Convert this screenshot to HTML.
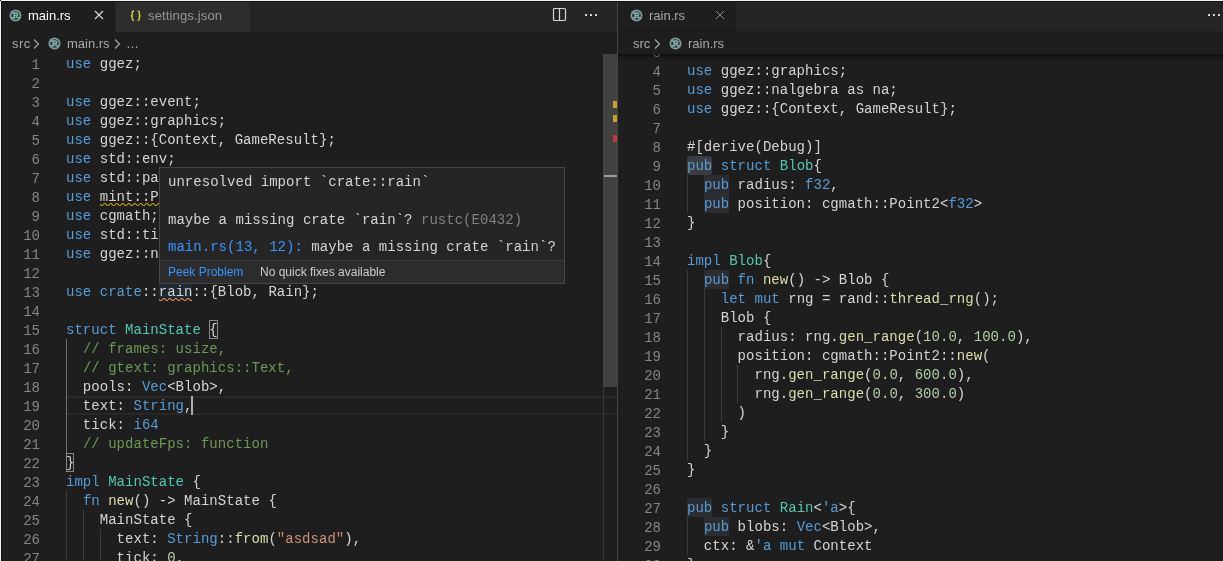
<!DOCTYPE html>
<html><head><meta charset="utf-8">
<style>
*{box-sizing:border-box;margin:0;padding:0}
html,body{width:1223px;height:561px;overflow:hidden;background:#1e1e1e}
body{position:relative;font-family:"Liberation Sans",sans-serif;font-size:13px;color:#ccc}
.abs{position:absolute}
.ln,.cl{position:absolute;height:19px;line-height:19px;font-family:"Liberation Mono",monospace;font-size:14px;white-space:pre}
.ln{text-align:right;color:#858585}
.cl{color:#d4d4d4;z-index:0;letter-spacing:0.03px}
.k{color:#569cd6}.t{color:#4ec9b0}.c{color:#6a9955}.f{color:#dcdcaa}.s{color:#ce9178}.n{color:#b5cea8}
.h,.h1{color:#569cd6;position:relative;display:inline-block;height:19px;vertical-align:top}
.h::before,.h1::before{content:'';position:absolute;left:0;right:0;top:-1px;height:19px;background:#2b2d31;z-index:-1}
.h1::before{background:#3a3d41;border-radius:3px}
.ig{position:absolute;width:1px;height:19px;background:#3c3c3c}
.ig.a{background:#707070}
.bm{position:relative;display:inline-block;height:19px;vertical-align:top}
.bm::before{content:'';position:absolute;left:0;right:0;top:-1px;height:19px;border:1px solid #888;box-sizing:border-box}
.wy,.wr{position:relative}
.tab{position:absolute;top:1px;height:31px;line-height:31px;font-size:13px;white-space:nowrap}
.ui{position:absolute;white-space:nowrap;font-size:13px}
#lp,#rp{position:absolute;top:0;height:561px;overflow:hidden;will-change:transform}
</style></head><body>
<!-- left pane -->
<div id="lp" style="left:0;width:617px">
  <div class="abs" style="left:0;top:1px;width:617px;height:31px;background:#252526"></div>
  <div class="abs" style="left:1px;top:1px;width:114px;height:31px;background:#1e1e1e"></div>
  <div class="abs" style="left:116px;top:1px;width:134px;height:31px;background:#2d2d2d"></div>
  <svg class="abs" style="left:9px;top:9px" width="13" height="13" viewBox="0 0 13 13"><circle cx="6.5" cy="6.5" r="6" fill="#7f9d9a"/><circle cx="6.5" cy="6.5" r="4.3" fill="#213a38"/><path d="M3 3.9h4.4a1.3 1.3 0 0 1 0 2.6H5.3M5.2 3.9v4.8M7 6.5l1.4 2.2M2.6 8.7h3.9M7.9 8.7h2.6" stroke="#8eaca9" stroke-width="1.5" fill="none"/></svg>
  <div class="ui" style="left:28px;top:8px;color:#fff">main.rs</div>
  <svg class="abs" style="left:94px;top:10px" width="10" height="10" viewBox="0 0 10 10"><path d="M1 1l8 8M9 1l-8 8" stroke="#dcdcdc" stroke-width="1.1" fill="none"/></svg>
  <svg class="abs" style="left:129px;top:9px" width="14" height="13" viewBox="0 0 14 13"><path d="M5 2C3.6 2 3.3 2.4 3.3 3.4V5.4C3.3 6.2 2.8 6.7 1.8 6.75C2.8 6.8 3.3 7.3 3.3 8.1V10.1C3.3 11.1 3.6 11.5 5 11.5M8.6 2C10 2 10.3 2.4 10.3 3.4V5.4C10.3 6.2 10.8 6.7 11.8 6.75C10.8 6.8 10.3 7.3 10.3 8.1V10.1C10.3 11.1 10 11.5 8.6 11.5" stroke="#cbcb41" stroke-width="1.5" fill="none"/></svg>
  <div class="ui" style="left:148px;top:8px;color:#969696;letter-spacing:0.15px">settings.json</div>
  <!-- actions -->
  <svg class="abs" style="left:552px;top:7px" width="16" height="16" viewBox="0 0 16 16"><rect x="1.5" y="1.5" width="12" height="12" rx="1" fill="none" stroke="#d4d4d4" stroke-width="1.2"/><path d="M7.5 1.5v12" stroke="#d4d4d4" stroke-width="1.2"/></svg>
  <div class="abs" style="left:585px;top:14px;width:2px;height:2px;background:#d4d4d4;box-shadow:5px 0 #d4d4d4,10px 0 #d4d4d4"></div>
  <!-- breadcrumbs -->
  <div class="ui" style="left:12px;top:36px;color:#a9a9a9;letter-spacing:0.4px">src</div>
  <svg class="abs" style="left:32px;top:38px" width="9" height="12" viewBox="0 0 9 12"><path d="M2 1.5l4.5 4.5L2 10.5" stroke="#a9a9a9" stroke-width="1.1" fill="none"/></svg>
  <svg class="abs" style="left:48px;top:37px" width="13" height="13" viewBox="0 0 13 13"><circle cx="6.5" cy="6.5" r="6" fill="#7f9d9a"/><circle cx="6.5" cy="6.5" r="4.3" fill="#213a38"/><path d="M3 3.9h4.4a1.3 1.3 0 0 1 0 2.6H5.3M5.2 3.9v4.8M7 6.5l1.4 2.2M2.6 8.7h3.9M7.9 8.7h2.6" stroke="#8eaca9" stroke-width="1.5" fill="none"/></svg>
  <div class="ui" style="left:67px;top:36px;color:#a9a9a9">main.rs</div>
  <svg class="abs" style="left:113px;top:38px" width="9" height="12" viewBox="0 0 9 12"><path d="M2 1.5l4.5 4.5L2 10.5" stroke="#a9a9a9" stroke-width="1.1" fill="none"/></svg>
  <div class="ui" style="left:126px;top:36px;color:#a9a9a9">…</div>
  <!-- current line -->
  <div class="abs" style="left:66px;top:396px;width:551px;height:19px;border:2px solid #282828;border-left:0;border-right:0"></div>
  <!-- squiggles -->
  <svg class="abs" style="left:0;top:0" width="617" height="561">
    <defs>
      <pattern id="sqy" x="100" y="203" width="6" height="3" patternUnits="userSpaceOnUse"><g fill="#cca700"><polygon points="5.5,0 2.5,3 1.1,3 4.1,0"/><polygon points="4,0 6,2 6,0.6 5.4,0"/><polygon points="0,2 1,3 2.4,3 0,0.6"/></g></pattern>
      <pattern id="sqr" x="159" y="298" width="6" height="3" patternUnits="userSpaceOnUse"><g fill="#f48771"><polygon points="5.5,0 2.5,3 1.1,3 4.1,0"/><polygon points="4,0 6,2 6,0.6 5.4,0"/><polygon points="0,2 1,3 2.4,3 0,0.6"/></g></pattern>
    </defs>
    <rect x="159" y="282" width="33" height="16" fill="#264f78" fill-opacity="0.2"/>
    <rect x="100" y="203" width="100" height="3" fill="url(#sqy)"/>
    <rect x="159" y="298" width="33" height="3" fill="url(#sqr)"/>
  </svg>
<div class="ln" style="left:0;width:40px;top:56px">1</div>
<div class="cl" style="left:66px;top:55px"><span class="k">use</span> ggez;</div>
<div class="ln" style="left:0;width:40px;top:75px">2</div>
<div class="cl" style="left:66px;top:74px"></div>
<div class="ln" style="left:0;width:40px;top:94px">3</div>
<div class="cl" style="left:66px;top:93px"><span class="k">use</span> ggez::event;</div>
<div class="ln" style="left:0;width:40px;top:113px">4</div>
<div class="cl" style="left:66px;top:112px"><span class="k">use</span> ggez::graphics;</div>
<div class="ln" style="left:0;width:40px;top:132px">5</div>
<div class="cl" style="left:66px;top:131px"><span class="k">use</span> ggez::{Context, GameResult};</div>
<div class="ln" style="left:0;width:40px;top:151px">6</div>
<div class="cl" style="left:66px;top:150px"><span class="k">use</span> std::env;</div>
<div class="ln" style="left:0;width:40px;top:170px">7</div>
<div class="cl" style="left:66px;top:169px"><span class="k">use</span> std::path;</div>
<div class="ln" style="left:0;width:40px;top:189px">8</div>
<div class="cl" style="left:66px;top:188px"><span class="k">use</span> <span class="wy">mint::Point2</span>;</div>
<div class="ln" style="left:0;width:40px;top:208px">9</div>
<div class="cl" style="left:66px;top:207px"><span class="k">use</span> cgmath;</div>
<div class="ln" style="left:0;width:40px;top:227px">10</div>
<div class="cl" style="left:66px;top:226px"><span class="k">use</span> std::time;</div>
<div class="ln" style="left:0;width:40px;top:246px">11</div>
<div class="cl" style="left:66px;top:245px"><span class="k">use</span> ggez::nalgebra as na;</div>
<div class="ln" style="left:0;width:40px;top:265px">12</div>
<div class="cl" style="left:66px;top:264px"></div>
<div class="ln" style="left:0;width:40px;top:284px">13</div>
<div class="cl" style="left:66px;top:283px"><span class="k">use</span> <span class="k">crate</span>::<span class="wr">rain</span>::{Blob, Rain};</div>
<div class="ln" style="left:0;width:40px;top:303px">14</div>
<div class="cl" style="left:66px;top:302px"></div>
<div class="ln" style="left:0;width:40px;top:322px">15</div>
<div class="cl" style="left:66px;top:321px"><span class="k">struct</span> <span class="t">MainState</span> <span class="bm">{</span></div>
<div class="ln" style="left:0;width:40px;top:341px">16</div>
<div class="cl" style="left:66px;top:340px">  <span class="c">// frames: usize,</span></div>
<div class="ig a" style="left:66.0px;top:339px"></div>
<div class="ln" style="left:0;width:40px;top:360px">17</div>
<div class="cl" style="left:66px;top:359px">  <span class="c">// gtext: graphics::Text,</span></div>
<div class="ig a" style="left:66.0px;top:358px"></div>
<div class="ln" style="left:0;width:40px;top:379px">18</div>
<div class="cl" style="left:66px;top:378px">  pools: <span class="k">Vec</span>&lt;Blob&gt;,</div>
<div class="ig a" style="left:66.0px;top:377px"></div>
<div class="ln" style="left:0;width:40px;top:398px">19</div>
<div class="cl" style="left:66px;top:397px">  text: <span class="k">String</span>,</div>
<div class="ig a" style="left:66.0px;top:396px"></div>
<div class="ln" style="left:0;width:40px;top:417px">20</div>
<div class="cl" style="left:66px;top:416px">  tick: <span class="k">i64</span></div>
<div class="ig a" style="left:66.0px;top:415px"></div>
<div class="ln" style="left:0;width:40px;top:436px">21</div>
<div class="cl" style="left:66px;top:435px">  <span class="c">// updateFps: function</span></div>
<div class="ig a" style="left:66.0px;top:434px"></div>
<div class="ln" style="left:0;width:40px;top:455px">22</div>
<div class="cl" style="left:66px;top:454px"><span class="bm">}</span></div>
<div class="ln" style="left:0;width:40px;top:474px">23</div>
<div class="cl" style="left:66px;top:473px"><span class="k">impl</span> <span class="t">MainState</span> {</div>
<div class="ln" style="left:0;width:40px;top:493px">24</div>
<div class="cl" style="left:66px;top:492px">  <span class="k">fn</span> <span class="f">new</span>() -&gt; MainState {</div>
<div class="ig" style="left:66.0px;top:491px"></div>
<div class="ln" style="left:0;width:40px;top:512px">25</div>
<div class="cl" style="left:66px;top:511px">    MainState {</div>
<div class="ig" style="left:66.0px;top:510px"></div>
<div class="ig" style="left:82.8px;top:510px"></div>
<div class="ln" style="left:0;width:40px;top:531px">26</div>
<div class="cl" style="left:66px;top:530px">      text: <span class="k">String</span>::<span class="f">from</span>(<span class="s">&quot;asdsad&quot;</span>),</div>
<div class="ig" style="left:66.0px;top:529px"></div>
<div class="ig" style="left:82.8px;top:529px"></div>
<div class="ig" style="left:99.6px;top:529px"></div>
<div class="ln" style="left:0;width:40px;top:550px">27</div>
<div class="cl" style="left:66px;top:549px">      tick: <span class="n">0</span>,</div>
<div class="ig" style="left:66.0px;top:548px"></div>
<div class="ig" style="left:82.8px;top:548px"></div>
<div class="ig" style="left:99.6px;top:548px"></div>
  <!-- cursor -->
  <div class="abs" style="left:191px;top:396px;width:2px;height:19px;background:#aeafad"></div>
  <!-- scrollbar / overview -->
  <div class="abs" style="left:603px;top:54px;width:1px;height:507px;background:#3a3a3a"></div>
  <div class="abs" style="left:603px;top:54px;width:14px;height:333px;background:#424242"></div>
  <div class="abs" style="left:613px;top:101px;width:4px;height:7px;background:#c5a332"></div>
  <div class="abs" style="left:613px;top:115px;width:4px;height:7px;background:#c5a332"></div>
  <div class="abs" style="left:613px;top:135px;width:4px;height:7px;background:#bd3a44"></div>
  <div class="abs" style="left:604px;top:175px;width:13px;height:2px;background:#9c9c9c"></div>
  <!-- hover -->
  <div class="abs" style="left:159px;top:167px;width:406px;height:117px;background:#252526;border:1px solid #454545"></div>
  <div class="abs" style="left:160px;top:260px;width:404px;height:23px;background:#2c2c2d;border-top:1px solid #3a3a3a"></div>
  <div class="cl" style="left:168px;top:173px">unresolved import `crate::rain`</div>
  <div class="cl" style="left:168px;top:211px">maybe a missing crate `rain`? <span style="color:#808080">rustc(E0432)</span></div>
  <div class="cl" style="left:168px;top:238px"><span style="color:#3794ff">main.rs(13, 12):</span> maybe a missing crate `rain`?</div>
  <div class="ui" style="left:168px;top:265px;font-size:12px;color:#3794ff">Peek Problem</div>
  <div class="ui" style="left:260px;top:265px;font-size:12px;color:#ccc">No quick fixes available</div>
</div>
<!-- divider -->
<div class="abs" style="left:617px;top:1px;width:1px;height:560px;background:#444"></div>
<!-- right pane -->
<div id="rp" style="left:618px;width:605px">
 <div class="abs" style="left:-618px;top:0;width:1223px;height:561px">
<div class="ln" style="left:601px;width:60px;top:44px">3</div>
<div class="cl" style="left:687px;top:43px"></div>
<div class="ln" style="left:601px;width:60px;top:63px">4</div>
<div class="cl" style="left:687px;top:62px"><span class="k">use</span> ggez::graphics;</div>
<div class="ln" style="left:601px;width:60px;top:82px">5</div>
<div class="cl" style="left:687px;top:81px"><span class="k">use</span> ggez::nalgebra as na;</div>
<div class="ln" style="left:601px;width:60px;top:101px">6</div>
<div class="cl" style="left:687px;top:100px"><span class="k">use</span> ggez::{Context, GameResult};</div>
<div class="ln" style="left:601px;width:60px;top:120px">7</div>
<div class="cl" style="left:687px;top:119px"></div>
<div class="ln" style="left:601px;width:60px;top:139px">8</div>
<div class="cl" style="left:687px;top:138px">#[derive(Debug)]</div>
<div class="ln" style="left:601px;width:60px;top:158px">9</div>
<div class="cl" style="left:687px;top:157px"><span class="h1">pub</span> <span class="k">struct</span> <span class="t">Blob</span>{</div>
<div class="ln" style="left:601px;width:60px;top:177px">10</div>
<div class="cl" style="left:687px;top:176px">  <span class="h">pub</span> radius: <span class="k">f32</span>,</div>
<div class="ig" style="left:687.0px;top:175px"></div>
<div class="ln" style="left:601px;width:60px;top:196px">11</div>
<div class="cl" style="left:687px;top:195px">  <span class="h">pub</span> position: cgmath::Point2&lt;<span class="k">f32</span>&gt;</div>
<div class="ig" style="left:687.0px;top:194px"></div>
<div class="ln" style="left:601px;width:60px;top:215px">12</div>
<div class="cl" style="left:687px;top:214px">}</div>
<div class="ln" style="left:601px;width:60px;top:234px">13</div>
<div class="cl" style="left:687px;top:233px"></div>
<div class="ln" style="left:601px;width:60px;top:253px">14</div>
<div class="cl" style="left:687px;top:252px"><span class="k">impl</span> <span class="t">Blob</span>{</div>
<div class="ln" style="left:601px;width:60px;top:272px">15</div>
<div class="cl" style="left:687px;top:271px">  <span class="h">pub</span> <span class="k">fn</span> <span class="f">new</span>() -&gt; Blob {</div>
<div class="ig" style="left:687.0px;top:270px"></div>
<div class="ln" style="left:601px;width:60px;top:291px">16</div>
<div class="cl" style="left:687px;top:290px">    <span class="k">let</span> <span class="k">mut</span> rng = rand::<span class="f">thread_rng</span>();</div>
<div class="ig" style="left:687.0px;top:289px"></div>
<div class="ig" style="left:703.8px;top:289px"></div>
<div class="ln" style="left:601px;width:60px;top:310px">17</div>
<div class="cl" style="left:687px;top:309px">    Blob {</div>
<div class="ig" style="left:687.0px;top:308px"></div>
<div class="ig" style="left:703.8px;top:308px"></div>
<div class="ln" style="left:601px;width:60px;top:329px">18</div>
<div class="cl" style="left:687px;top:328px">      radius: rng.<span class="f">gen_range</span>(<span class="n">10.0</span>, <span class="n">100.0</span>),</div>
<div class="ig" style="left:687.0px;top:327px"></div>
<div class="ig" style="left:703.8px;top:327px"></div>
<div class="ig" style="left:720.6px;top:327px"></div>
<div class="ln" style="left:601px;width:60px;top:348px">19</div>
<div class="cl" style="left:687px;top:347px">      position: cgmath::Point2::<span class="f">new</span>(</div>
<div class="ig" style="left:687.0px;top:346px"></div>
<div class="ig" style="left:703.8px;top:346px"></div>
<div class="ig" style="left:720.6px;top:346px"></div>
<div class="ln" style="left:601px;width:60px;top:367px">20</div>
<div class="cl" style="left:687px;top:366px">        rng.<span class="f">gen_range</span>(<span class="n">0.0</span>, <span class="n">600.0</span>),</div>
<div class="ig" style="left:687.0px;top:365px"></div>
<div class="ig" style="left:703.8px;top:365px"></div>
<div class="ig" style="left:720.6px;top:365px"></div>
<div class="ig" style="left:737.4px;top:365px"></div>
<div class="ln" style="left:601px;width:60px;top:386px">21</div>
<div class="cl" style="left:687px;top:385px">        rng.<span class="f">gen_range</span>(<span class="n">0.0</span>, <span class="n">300.0</span>)</div>
<div class="ig" style="left:687.0px;top:384px"></div>
<div class="ig" style="left:703.8px;top:384px"></div>
<div class="ig" style="left:720.6px;top:384px"></div>
<div class="ig" style="left:737.4px;top:384px"></div>
<div class="ln" style="left:601px;width:60px;top:405px">22</div>
<div class="cl" style="left:687px;top:404px">      )</div>
<div class="ig" style="left:687.0px;top:403px"></div>
<div class="ig" style="left:703.8px;top:403px"></div>
<div class="ig" style="left:720.6px;top:403px"></div>
<div class="ln" style="left:601px;width:60px;top:424px">23</div>
<div class="cl" style="left:687px;top:423px">    }</div>
<div class="ig" style="left:687.0px;top:422px"></div>
<div class="ig" style="left:703.8px;top:422px"></div>
<div class="ln" style="left:601px;width:60px;top:443px">24</div>
<div class="cl" style="left:687px;top:442px">  }</div>
<div class="ig" style="left:687.0px;top:441px"></div>
<div class="ln" style="left:601px;width:60px;top:462px">25</div>
<div class="cl" style="left:687px;top:461px">}</div>
<div class="ln" style="left:601px;width:60px;top:481px">26</div>
<div class="cl" style="left:687px;top:480px"></div>
<div class="ln" style="left:601px;width:60px;top:500px">27</div>
<div class="cl" style="left:687px;top:499px"><span class="h">pub</span> <span class="k">struct</span> <span class="t">Rain</span>&lt;<span class="k">&#x27;a</span>&gt;{</div>
<div class="ln" style="left:601px;width:60px;top:519px">28</div>
<div class="cl" style="left:687px;top:518px">  <span class="h">pub</span> blobs: <span class="k">Vec</span>&lt;Blob&gt;,</div>
<div class="ig" style="left:687.0px;top:517px"></div>
<div class="ln" style="left:601px;width:60px;top:538px">29</div>
<div class="cl" style="left:687px;top:537px">  ctx: &amp;<span class="k">&#x27;a</span> <span class="k">mut</span> Context</div>
<div class="ig" style="left:687.0px;top:536px"></div>
<div class="ln" style="left:601px;width:60px;top:557px">30</div>
<div class="cl" style="left:687px;top:556px">}</div>
  <div class="abs" style="left:618px;top:1px;width:605px;height:31px;background:#252526"></div>
  <div class="abs" style="left:618px;top:1px;width:118px;height:31px;background:#1e1e1e"></div>
  <div class="abs" style="left:598px;top:32px;width:660px;height:22px;background:#1e1e1e;box-shadow:0 3px 4px -1px rgba(0,0,0,.65)"></div>
  <svg class="abs" style="left:630px;top:9px" width="13" height="13" viewBox="0 0 13 13"><circle cx="6.5" cy="6.5" r="6" fill="#7f9d9a"/><circle cx="6.5" cy="6.5" r="4.3" fill="#213a38"/><path d="M3 3.9h4.4a1.3 1.3 0 0 1 0 2.6H5.3M5.2 3.9v4.8M7 6.5l1.4 2.2M2.6 8.7h3.9M7.9 8.7h2.6" stroke="#8eaca9" stroke-width="1.5" fill="none"/></svg>
  <div class="ui" style="left:649px;top:8px;color:#a8a8a8">rain.rs</div>
  <svg class="abs" style="left:715px;top:10px" width="10" height="10" viewBox="0 0 10 10"><path d="M1 1l8 8M9 1l-8 8" stroke="#8c8c8c" stroke-width="1" fill="none"/></svg>
  <div class="ui" style="left:633px;top:36px;color:#a9a9a9">src</div>
  <svg class="abs" style="left:653px;top:38px" width="9" height="12" viewBox="0 0 9 12"><path d="M2 1.5l4.5 4.5L2 10.5" stroke="#a9a9a9" stroke-width="1.1" fill="none"/></svg>
  <svg class="abs" style="left:669px;top:37px" width="13" height="13" viewBox="0 0 13 13"><circle cx="6.5" cy="6.5" r="6" fill="#7f9d9a"/><circle cx="6.5" cy="6.5" r="4.3" fill="#213a38"/><path d="M3 3.9h4.4a1.3 1.3 0 0 1 0 2.6H5.3M5.2 3.9v4.8M7 6.5l1.4 2.2M2.6 8.7h3.9M7.9 8.7h2.6" stroke="#8eaca9" stroke-width="1.5" fill="none"/></svg>
  <div class="ui" style="left:688px;top:36px;color:#a9a9a9">rain.rs</div>
  <div class="abs" style="left:1208px;top:14px;width:2px;height:2px;background:#d4d4d4;box-shadow:5px 0 #d4d4d4,10px 0 #d4d4d4"></div>
 </div>
</div>
<!-- frame lines -->
<div class="abs" style="left:1px;top:1px;width:1222px;height:1px;background:#111"></div>
<div class="abs" style="left:1px;top:1px;width:1px;height:560px;background:#111"></div>
<div class="abs" style="left:1px;top:0;width:1222px;height:1px;background:#f4f4f4"></div>
<div class="abs" style="left:0;top:1px;width:1px;height:560px;background:#f4f4f4"></div>
<div class="abs" style="left:0;top:0;width:1px;height:1px;background:#000"></div>
</body></html>
